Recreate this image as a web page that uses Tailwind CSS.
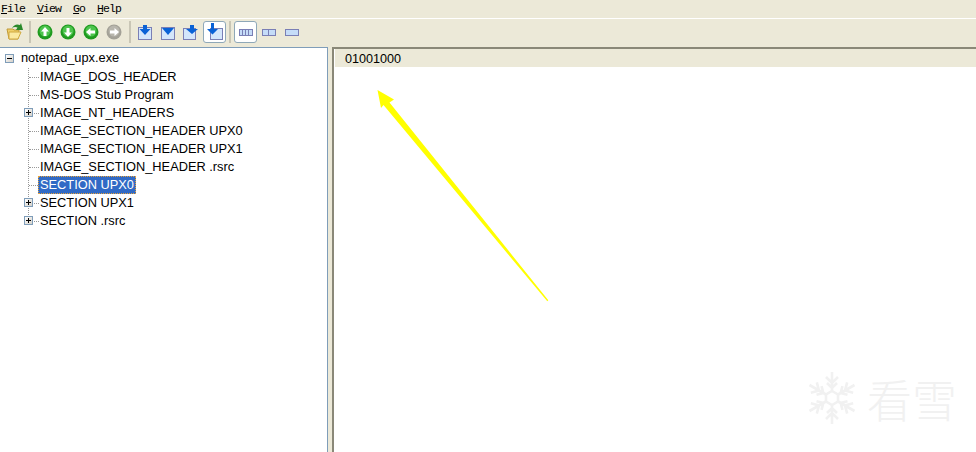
<!DOCTYPE html>
<html lang="en">
<head>
  <meta charset="UTF-8" />
  <title>notepad_upx.exe</title>
  <script src="https://cdn.jsdelivr.net/npm/@tailwindcss/browser@4"></script>
</head>
<body class="w-[976px] h-[452px] overflow-hidden bg-[#ece9d8] text-black font-['Liberation_Sans',sans-serif] relative">
  <!-- menu -->
  <div class="h-[19px] flex items-center gap-[12px] pl-[1px] border-b border-white font-['Liberation_Mono',monospace] text-[11.5px] tracking-[-0.9px] leading-none text-black">
    <span><u>F</u>ile</span>
    <span><u>V</u>iew</span>
    <span><u>G</u>o</span>
    <span><u>H</u>elp</span>
  </div>

  <!-- toolbar -->
  <div class="h-[28px] pb-[2px] flex items-center pl-[3px]">
    <div class="w-[23px] h-[22px] flex items-center justify-center">
      <svg width="18" height="18" viewBox="0 0 18 18">
        <path d="M1 6h6l1 1h5l-1 9H3z" fill="#f0cf68" stroke="#c09a38"/>
        <path d="M3 9h12l-3 7H3z" fill="#fbe9a0" stroke="#d0a840"/>
        <path d="M6 5q3-5 8-3l1-2 2 7-7 0 1.500-2.500q-3-1-5.500 .5z" fill="#2b8a2b"/>
      </svg>
    </div>
    <div class="w-[8px] h-[22px] flex justify-center"><div class="w-[2px] h-full bg-[#c9c6b6]"></div></div>

    <div class="w-[23px] h-[22px] pr-[1px] flex items-center justify-center">
      <svg width="16" height="16" viewBox="0 0 16 16"><circle cx="8" cy="8" r="7.500" fill="#1f9a1f"/><circle cx="8" cy="7" r="5.500" fill="#4cc44c"/><path d="M8 3l4 4.500H9.500V12h-3V7.500H4z" fill="#fff"/></svg>
    </div>
    <div class="w-[23px] h-[22px] pr-[1px] flex items-center justify-center">
      <svg width="16" height="16" viewBox="0 0 16 16"><circle cx="8" cy="8" r="7.500" fill="#1f9a1f"/><circle cx="8" cy="7" r="5.500" fill="#4cc44c"/><path d="M8 13l4-4.500H9.500V4h-3v4.500H4z" fill="#fff"/></svg>
    </div>
    <div class="w-[23px] h-[22px] pr-[1px] flex items-center justify-center">
      <svg width="16" height="16" viewBox="0 0 16 16"><circle cx="8" cy="8" r="7.500" fill="#1f9a1f"/><circle cx="8" cy="7" r="5.500" fill="#4cc44c"/><path d="M3 8l4.500-4v2.500H12v3H7.500V12z" fill="#fff"/></svg>
    </div>
    <div class="w-[23px] h-[22px] pr-[1px] flex items-center justify-center">
      <svg width="16" height="16" viewBox="0 0 16 16"><circle cx="8" cy="8" r="7.500" fill="#a3a197"/><circle cx="8" cy="7" r="5.500" fill="#b8b6ad"/><path d="M13 8L8.500 4v2.500H4v3h4.500V12z" fill="#fff"/></svg>
    </div>
    <div class="w-[8px] h-[22px] flex justify-center"><div class="w-[2px] h-full bg-[#c9c6b6]"></div></div>

    <div class="w-[23px] h-[22px] pr-[1px] flex items-center justify-center">
      <svg width="14" height="15" viewBox="0 0 14 15"><rect x="0.500" y="2.500" width="13" height="12" fill="#d4e6fb" stroke="#7a7fb5"/><path d="M5 0h4v4h3.500L7 10 1.500 4H5z" fill="#0a62d6"/></svg>
    </div>
    <div class="w-[23px] h-[22px] pr-[1px] flex items-center justify-center">
      <svg width="14" height="15" viewBox="0 0 14 15"><rect x="0.500" y="2.500" width="13" height="12" fill="#d4e6fb" stroke="#7a7fb5"/><path d="M1 3h12L7 10z" fill="#0a62d6"/></svg>
    </div>
    <div class="w-[23px] h-[22px] pr-[1px] flex items-center justify-center">
      <svg width="16" height="15" viewBox="0 0 16 15"><rect x="0.500" y="3.500" width="12" height="11" fill="#d4e6fb" stroke="#7a7fb5"/><path d="M7 0h4v4h4l-6 5-6-5h4z" fill="#0a62d6"/></svg>
    </div>
    <div class="w-[23px] h-[22px] flex items-center justify-center bg-white border border-[#8fa8b8] rounded-[3px]">
      <svg width="16" height="18" viewBox="0 0 16 18"><rect x="3.500" y="5.500" width="12" height="11" fill="#d4e6fb" stroke="#7a7fb5"/><path d="M4 0h3v6h4l-5.500 5.500L0 6h4z" fill="#0a62d6"/></svg>
    </div>
    <div class="w-[8px] h-[22px] flex justify-center"><div class="w-[2px] h-full bg-[#c9c6b6]"></div></div>

    <div class="w-[23px] h-[22px] flex items-center justify-center bg-white border border-[#8fa8b8] rounded-[3px]">
      <svg width="14" height="7" viewBox="0 0 14 7"><rect x="0.500" y="0.500" width="13" height="6" fill="#c5dcf8" stroke="#7a7fb5"/><path d="M3.500 1v5M6.500 1v5M9.500 1v5" stroke="#7a7fb5"/></svg>
    </div>
    <div class="w-[23px] h-[22px] flex items-center justify-center">
      <svg width="14" height="7" viewBox="0 0 14 7"><rect x="0.500" y="0.500" width="13" height="6" fill="#c5dcf8" stroke="#7a7fb5"/><path d="M6.500 1v5" stroke="#7a7fb5"/></svg>
    </div>
    <div class="w-[23px] h-[22px] flex items-center justify-center">
      <svg width="14" height="7" viewBox="0 0 14 7"><rect x="0.500" y="0.500" width="13" height="6" fill="#c5dcf8" stroke="#7a7fb5"/></svg>
    </div>
  </div>

  <div class="flex h-[405px]">
    <!-- tree -->
    <div class="w-[328px] bg-white border-t border-r border-[#7f9db9] text-[12.8px] leading-none">
      <div class="h-[19px] flex items-center pl-[5px] mt-[1px]">
        <span class="w-[9px] h-[9px] border border-[#7f9db9] bg-linear-to-br from-white to-[#d4d0c8] flex items-center justify-center"><span class="w-[5px] h-px bg-black"></span></span>
        <span class="ml-[7px]">notepad_upx.exe</span>
      </div>
      <div class="ml-[28px] w-fit border-l border-dotted border-[#999] h-[153px]">
        <div class="h-[18px] flex items-center"><span class="w-[10px] border-t border-dotted border-[#999]"></span><span class="ml-[1px]">IMAGE_DOS_HEADER</span></div>
        <div class="h-[18px] flex items-center"><span class="w-[10px] border-t border-dotted border-[#999]"></span><span class="ml-[1px]">MS-DOS Stub Program</span></div>
        <div class="h-[18px] flex items-center relative"><span class="w-[10px] border-t border-dotted border-[#999]"></span><span class="ml-[1px]">IMAGE_NT_HEADERS</span>
          <span class="absolute left-[-5px] top-[4px] w-[9px] h-[9px] bg-linear-to-br from-white to-[#d4d0c8] border border-[#7f9db9] flex items-center justify-center"><span class="w-[5px] h-[5px] bg-[linear-gradient(#000,#000),linear-gradient(#000,#000)] bg-no-repeat bg-[length:5px_1px,1px_5px] bg-center"></span></span>
        </div>
        <div class="h-[18px] flex items-center"><span class="w-[10px] border-t border-dotted border-[#999]"></span><span class="ml-[1px]">IMAGE_SECTION_HEADER UPX0</span></div>
        <div class="h-[18px] flex items-center"><span class="w-[10px] border-t border-dotted border-[#999]"></span><span class="ml-[1px]">IMAGE_SECTION_HEADER UPX1</span></div>
        <div class="h-[18px] flex items-center"><span class="w-[10px] border-t border-dotted border-[#999]"></span><span class="ml-[1px]">IMAGE_SECTION_HEADER .rsrc</span></div>
        <div class="h-[18px] flex items-center"><span class="w-[9px] border-t border-dotted border-[#999]"></span><span class="h-[18px] px-[1px] flex items-center bg-[#316ac5] text-white border border-dotted border-[#e8a33a]">SECTION UPX0</span></div>
        <div class="h-[18px] flex items-center relative"><span class="w-[10px] border-t border-dotted border-[#999]"></span><span class="ml-[1px]">SECTION UPX1</span>
          <span class="absolute left-[-5px] top-[4px] w-[9px] h-[9px] bg-linear-to-br from-white to-[#d4d0c8] border border-[#7f9db9] flex items-center justify-center"><span class="w-[5px] h-[5px] bg-[linear-gradient(#000,#000),linear-gradient(#000,#000)] bg-no-repeat bg-[length:5px_1px,1px_5px] bg-center"></span></span>
        </div>
        <div class="h-[18px] flex items-center relative"><span class="w-[10px] border-t border-dotted border-[#999]"></span><span class="ml-[1px]">SECTION .rsrc</span>
          <span class="absolute left-[-5px] top-[4px] w-[9px] h-[9px] bg-linear-to-br from-white to-[#d4d0c8] border border-[#7f9db9] flex items-center justify-center"><span class="w-[5px] h-[5px] bg-[linear-gradient(#000,#000),linear-gradient(#000,#000)] bg-no-repeat bg-[length:5px_1px,1px_5px] bg-center"></span></span>
        </div>
      </div>
    </div>

    <div class="w-[4px]"></div>

    <!-- detail pane -->
    <div class="flex-1 bg-white border-l-2 border-t-2 border-[#8a8878]">
      <div class="h-[18px] ml-[1px] bg-[#ece9d8] flex items-center pl-[10px] pt-[2px] text-[12.6px] leading-none">01001000</div>
    </div>
  </div>

  <!-- arrow drawn on top of the capture -->
  <svg class="absolute left-0 top-0 pointer-events-none" width="976" height="452" viewBox="0 0 976 452">
    <path d="M377.500 90L394 99.500 389.500 102.500 548.300 300.300 547.300 301.300 383.500 105 381 108z" fill="#ffff00"/>
  </svg>

  <!-- watermark -->
  <div class="absolute left-[805px] top-[371px] flex items-center gap-[8px] pointer-events-none">
    <svg width="54" height="54" viewBox="-27 -27 54 54" fill="none" stroke="#f1f1f1" stroke-width="2.600">
      <path d="M0-7V-26M-6-21L0-15 6-21M-5-15L0-10 5-15"/>
      <path d="M0-7V-26M-6-21L0-15 6-21M-5-15L0-10 5-15" transform="rotate(60)"/>
      <path d="M0-7V-26M-6-21L0-15 6-21M-5-15L0-10 5-15" transform="rotate(120)"/>
      <path d="M0-7V-26M-6-21L0-15 6-21M-5-15L0-10 5-15" transform="rotate(180)"/>
      <path d="M0-7V-26M-6-21L0-15 6-21M-5-15L0-10 5-15" transform="rotate(240)"/>
      <path d="M0-7V-26M-6-21L0-15 6-21M-5-15L0-10 5-15" transform="rotate(300)"/>
      <path d="M0-7L6-3.500V3.500L0 7-6 3.500V-3.500z"/>
    </svg>
    <span class="text-[45px] leading-none text-[#f1f1f1] font-['Noto_Sans_CJK_SC',sans-serif] font-light whitespace-nowrap">看雪</span>
  </div>
</body>
</html>
